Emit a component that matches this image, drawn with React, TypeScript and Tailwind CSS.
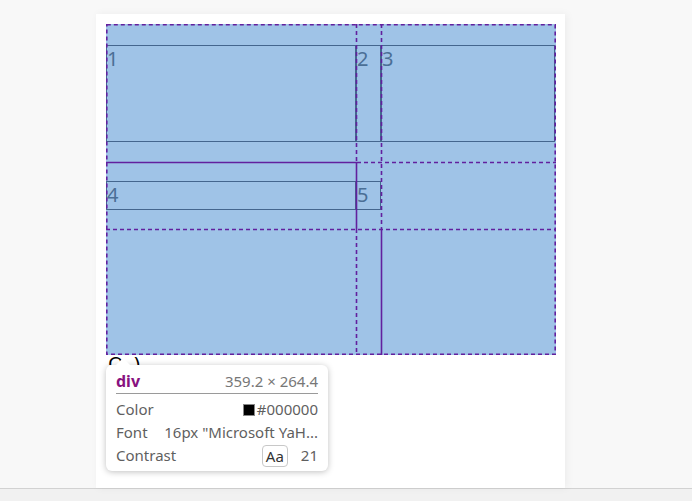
import React from 'react'

const items = [
    { label: '1', cls: 'col-start-1 row-start-1 h-[97px]' },
    { label: '2', cls: 'col-start-2 row-start-1 h-[97px]' },
    { label: '3', cls: 'col-start-3 row-start-1 h-[97px] mr-px' },
    { label: '4', cls: 'col-start-1 row-start-2 h-[29px]' },
    { label: '5', cls: 'col-start-2 row-start-2 h-[29px]' },
]

const dash = '4 3'

function GridOverlay() {
    return (
        <svg className="absolute inset-0 pointer-events-none" width="450" height="331" viewBox="0 0 450 331">
            <g stroke="#62209e" strokeWidth="1.6" fill="none">
                <rect x="0.8" y="0.8" width="448.4" height="329.4" strokeDasharray={dash} />
                <line x1="250.5" y1="0" x2="250.5" y2="138" strokeDasharray={dash} />
                <line x1="250.5" y1="138" x2="250.5" y2="205" />
                <line x1="250.5" y1="205" x2="250.5" y2="331" strokeDasharray={dash} />
                <line x1="275.5" y1="0" x2="275.5" y2="205" strokeDasharray={dash} />
                <line x1="275.5" y1="205" x2="275.5" y2="331" />
                <line x1="0" y1="138.5" x2="251" y2="138.5" />
                <line x1="251" y1="138.5" x2="450" y2="138.5" strokeDasharray={dash} />
                <line x1="0" y1="205.5" x2="450" y2="205.5" strokeDasharray={dash} />
            </g>
        </svg>
    )
}

function Tooltip() {
    return (
        <div className="absolute left-[10px] top-[351px] w-[222px] h-[106px] bg-white rounded-md shadow-[0_1px_6px_rgba(0,0,0,0.25)] px-[10px] pt-[5px] text-[15px] leading-[23px] text-[#5f5f5f]">
            <div className="absolute -top-[7px] left-[10px] w-0 h-0 border-l-[7px] border-r-[7px] border-b-[7px] border-l-transparent border-r-transparent border-b-white" />
            <div className="flex items-center justify-between border-b border-[#9a9a9a]">
                <span className="font-bold text-[16px] text-[#881280]">div</span>
                <span className="text-[#777]">359.2 × 264.4</span>
            </div>
            <div className="flex items-center justify-between mt-[4px]">
                <span>Color</span>
                <span className="flex items-center gap-[2px]">
                    <span className="w-[12px] h-[12px] bg-black border border-[#888]" />
                    <span>#000000</span>
                </span>
            </div>
            <div className="flex items-center justify-between">
                <span>Font</span>
                <span>16px "Microsoft YaH...</span>
            </div>
            <div className="flex items-center justify-between">
                <span>Contrast</span>
                <span className="flex items-center gap-[13px]">
                    <span className="border border-[#c8c8c8] rounded px-[3px] leading-[20px] text-[#333]">Aa</span>
                    <span>21</span>
                </span>
            </div>
        </div>
    )
}

export default function App() {
    return (
        <div className="h-[501px] bg-[#f8f8f8] flex flex-col overflow-hidden" style={{ fontFamily: '"Noto Sans", "Open Sans", sans-serif' }}>
            <div className="flex-1 flex mt-[14px]">
                <div className="relative ml-[96px] w-[469px] bg-white shadow-[2px_0_8px_rgba(0,0,0,0.05)] p-[10px]">
                    <div className="relative w-[450px] h-[331px] bg-[#9fc3e7]">
                        <div className="grid grid-cols-[250px_25px_175px] grid-rows-[138px_67px_126px] h-full">
                            {items.map((item) => (
                                <div
                                    key={item.label}
                                    className={`self-center border border-[#44668e] text-[20px] leading-[26px] text-[#4b6f96] ${item.cls}`}
                                >
                                    {item.label}
                                </div>
                            ))}
                        </div>
                        <GridOverlay />
                    </div>
                    <div className="h-[10px] overflow-hidden">
                        <div className="text-[20px] leading-[20px] text-black pl-[2px] mt-[-1px]">O &nbsp;)</div>
                    </div>
                    <Tooltip />
                </div>
            </div>
            <div className="h-[13px] bg-[#f1f1f1] border-t border-[#d2d2d2]" />
        </div>
    )
}
